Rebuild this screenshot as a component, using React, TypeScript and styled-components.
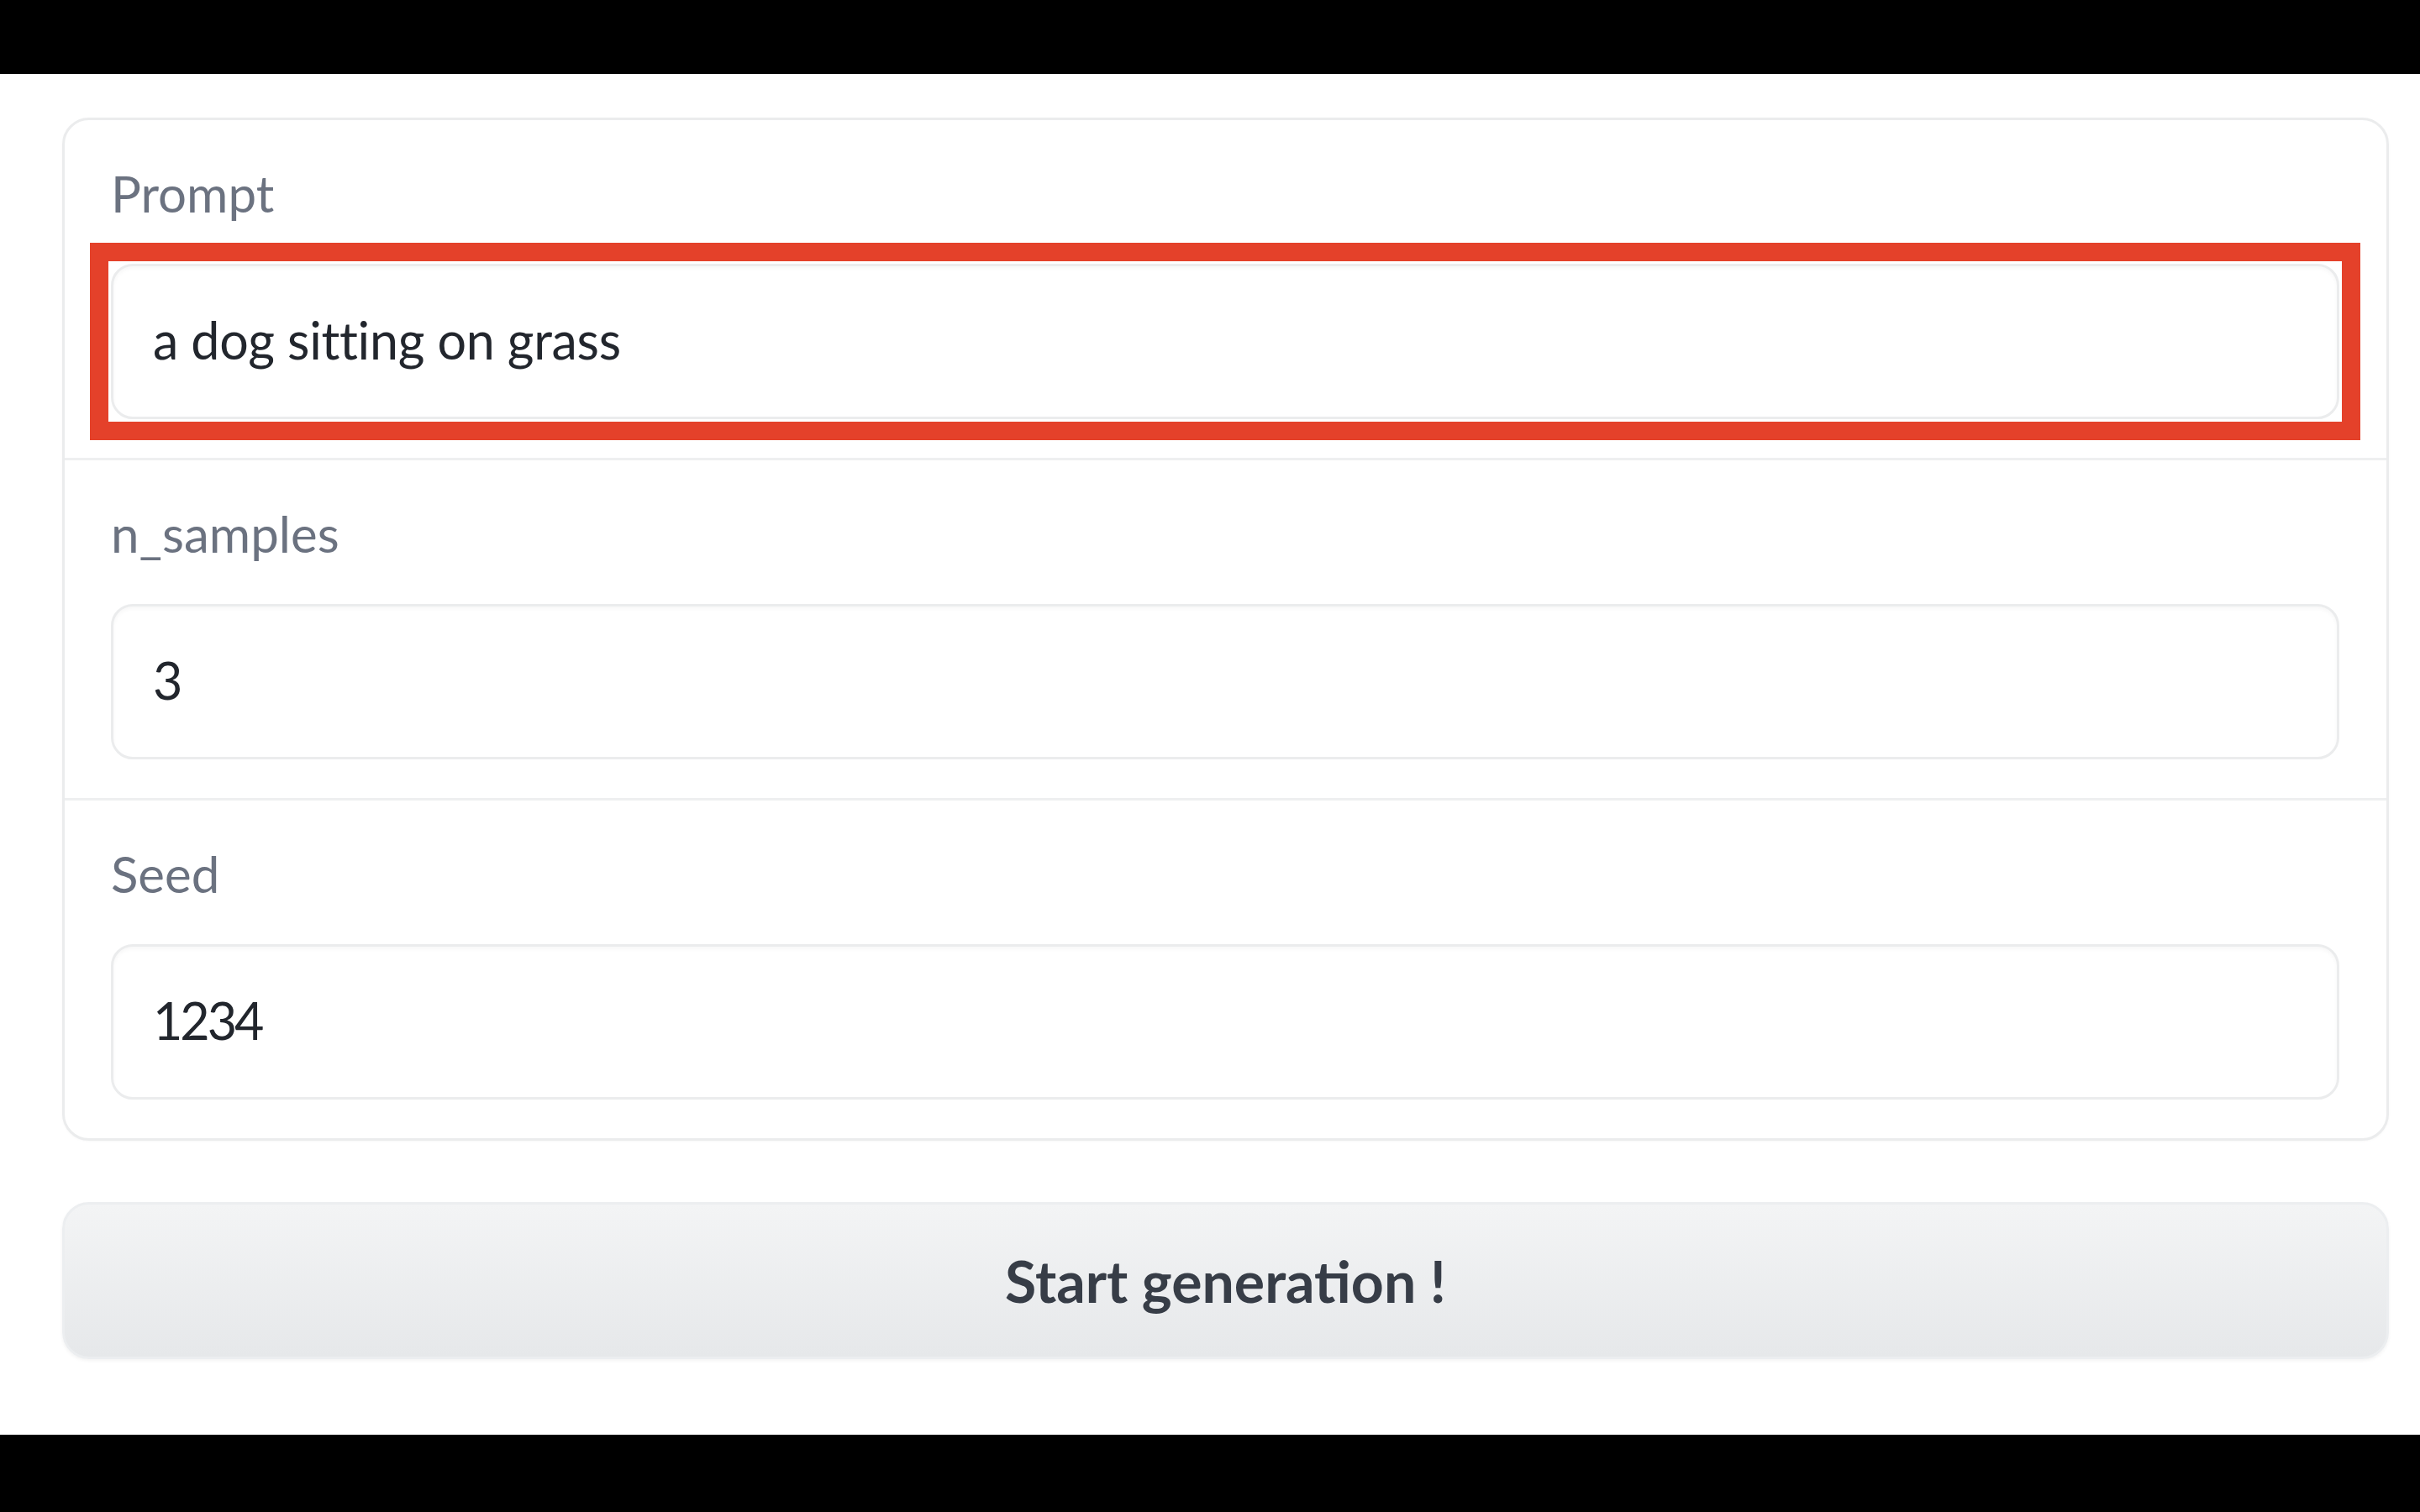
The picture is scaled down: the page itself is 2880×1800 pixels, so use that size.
import React from 'react';
import styled, { createGlobalStyle } from 'styled-components';

const GlobalStyle = createGlobalStyle`
  html, body {
    margin: 0;
    padding: 0;
    background: #000;
  }
  body {
    font-family: Lato, 'Noto Sans', sans-serif;
    font-variant-ligatures: none;
  }
`;

const fields = [
  { label: 'Prompt', value: 'a dog sitting on grass', highlighted: true },
  { label: 'n_samples', value: '3', numeric: true },
  { label: 'Seed', value: '1234', numeric: true },
];

const App = () => {
  return (
    <>
      <GlobalStyle />
      <Screen>
        <Bar />
        <Page>
          <Form>
            {fields.map((f, i) => (
              <Row key={f.label} $first={i === 0}>
                <Label>{f.label}</Label>
                <Highlight $on={!!f.highlighted}>
                  <Field>
                    <Value $numeric={!!f.numeric}>{f.value}</Value>
                  </Field>
                </Highlight>
              </Row>
            ))}
          </Form>
          <Button>Start generation !</Button>
        </Page>
        <Bar $bottom />
      </Screen>
    </>
  );
};

const Screen = styled.div`
  width: 2880px;
  height: 1800px;
  display: flex;
  flex-direction: column;
  background: #fff;
  overflow: hidden;
`;

const Bar = styled.div<{ $bottom?: boolean }>`
  height: ${(p) => (p.$bottom ? '92px' : '88px')};
  flex-shrink: 0;
  background: #000;
`;

const Page = styled.div`
  flex: 1;
  display: flex;
  flex-direction: column;
  gap: 73px;
  padding: 52px 37px 0 74px;
  background: #fff;
`;

const Form = styled.div`
  border: 3px solid #ebeced;
  border-radius: 32px;
  background: #fff;
  box-shadow: 0 1px 3px rgba(0, 0, 0, 0.03);
`;

const Row = styled.div<{ $first: boolean }>`
  display: flex;
  flex-direction: column;
  gap: 54px;
  padding: 57px 56px 46px 55px;
  border-top: ${(p) => (p.$first ? 'none' : '3px solid #eeeff0')};
`;

const Label = styled.span`
  font-size: 60px;
  line-height: 60px;
  color: #6b7280;
`;

const Highlight = styled.div<{ $on: boolean }>`
  outline: ${(p) => (p.$on ? '22px solid #e4412a' : 'none')};
  outline-offset: 3px;
`;

const Field = styled.div`
  height: 179px;
  display: flex;
  align-items: center;
  padding: 0 47px;
  border: 3px solid #ebeced;
  border-radius: 26px;
  background: #fff;
  box-shadow: inset 0 3px 4px rgba(0, 0, 0, 0.03);
`;

const Value = styled.span<{ $numeric: boolean }>`
  font-size: 61px;
  line-height: 1;
  color: #22262d;
  letter-spacing: ${(p) => (p.$numeric ? '-0.05em' : '-0.005em')};
  margin-top: -4px;
`;

const Button = styled.button`
  height: 187px;
  border: 3px solid #eceef0;
  border-radius: 32px;
  background: linear-gradient(180deg, #f3f4f5 0%, #e6e8ea 100%);
  box-shadow: 0 2px 4px rgba(0, 0, 0, 0.05);
  font-family: Lato, 'Noto Sans', sans-serif;
  font-weight: 700;
  font-size: 68px;
  color: #373d47;
  cursor: pointer;
`;

export default App;
